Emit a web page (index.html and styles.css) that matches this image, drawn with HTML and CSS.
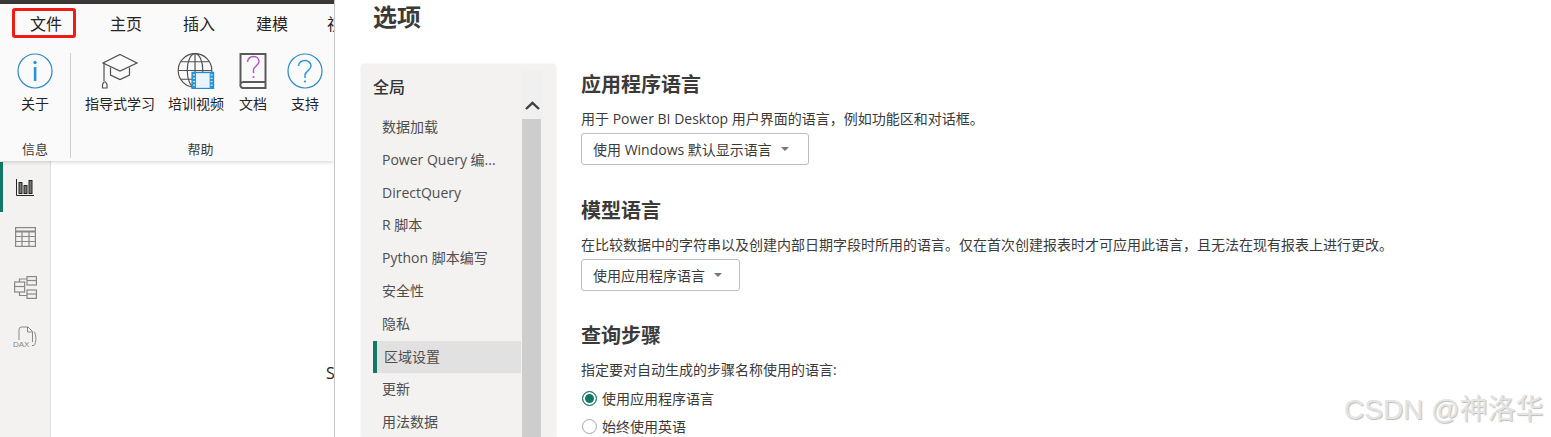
FILE: index.html
```html
<!DOCTYPE html>
<html lang="zh-CN">
<head>
<meta charset="utf-8">
<title>选项</title>
<link rel="stylesheet" href="styles.css">
</head>
<body>
<div class="app">
  <section class="left">
    <div class="topbar"></div>
    <header class="ribbon">
      <nav class="tabs">
        <span class="tab tab-file">文件</span>
        <span class="tab tab-home">主页</span>
        <span class="tab tab-insert">插入</span>
        <span class="tab tab-model">建模</span>
        <span class="tab tab-clip">视图</span>
      </nav>
      <div class="groups">
        <div class="group group-info">
          <div class="cmds">
            <div class="cmd cmd-about">
              <svg width="36" height="36" viewBox="0 0 36 36"><circle cx="18" cy="18" r="17" fill="none" stroke="#2b88c8" stroke-width="1.2"/><rect x="16.8" y="14" width="2.6" height="14" fill="#2b94d8"/><circle cx="18" cy="9.5" r="1.7" fill="#2b94d8"/></svg>
              <span>关于</span>
            </div>
          </div>
          <div class="group-label">信息</div>
        </div>
        <div class="group group-help">
          <div class="cmds">
            <div class="cmd cmd-learn">
              <svg width="38" height="36" viewBox="0 0 38 36" fill="none" stroke="#505050" stroke-width="1.2"><path d="M19 1.5 36 10 19 18 2 10Z"/><path d="M9.5 14.5V22L19 26.5 28.5 22V14.5"/><path d="M3 10V28"/><path d="M1.5 35V31.500L3 29 4.500 29 6 31.500V35Z"/></svg>
              <span>指导式学习</span>
            </div>
            <div class="cmd cmd-video">
              <svg width="38" height="37" viewBox="0 0 38 37"><g fill="none" stroke="#505050" stroke-width="1.2"><circle cx="18" cy="18" r="17.300"/><ellipse cx="18" cy="18" rx="8" ry="17.300"/><path d="M18 1V35M1 18H35M3.500 9H32.500M3.500 27H32.500"/></g><rect x="15" y="20" width="22" height="16.500" fill="#e8f4fb" stroke="#2b88c8" stroke-width="1.400"/><path d="M15 20h4v16.500h-4zM33 20h4v16.500h-4z" fill="#2b94d8"/><path d="M16 22.500h2M16 26h2M16 29.500h2M16 33h2M34 22.500h2M34 26h2M34 29.500h2M34 33h2" stroke="#fff"/></svg>
              <span>培训视频</span>
            </div>
            <div class="cmd cmd-doc">
              <svg width="28" height="36" viewBox="0 0 28 36"><path d="M1.500 31V1H26.500V35H4.500A3 3 0 0 1 1.500 31 3 3 0 0 1 4.500 29H26.500" fill="none" stroke="#5a5a5a" stroke-width="2"/><path d="M8.500 9C9 5 12 3.500 14.500 3.500 18 3.500 20 6 20 8.500 20 12 15 13.500 14.500 16.500V20" fill="none" stroke="#b552c4" stroke-width="1.400"/><circle cx="14.500" cy="24" r="1.100" fill="#b552c4"/></svg>
              <span>文档</span>
            </div>
            <div class="cmd cmd-support">
              <svg width="36" height="36" viewBox="0 0 36 36" fill="none"><circle cx="18" cy="18" r="17" stroke="#2b88c8" stroke-width="1.200"/><path d="M11.500 13C12 9 15 7.500 18 7.500 21.500 7.500 24 10 24 13 24 17 18.500 18 18 22V25" stroke="#2b94d8" stroke-width="1.400"/><circle cx="18" cy="28.500" r="1.100" fill="#2b94d8"/></svg>
              <span>支持</span>
            </div>
          </div>
          <div class="group-label">帮助</div>
        </div>
      </div>
    </header>
    <div class="work">
      <aside class="rail">
        <div class="rail-item rail-active">
          <svg width="18" height="17" viewBox="0 0 18 17" fill="none" stroke="#252423"><path d="M.5 0V16.500H18" stroke-width="1"/><rect x="3" y="3.500" width="3" height="11" fill="#777"/><rect x="8" y="6.500" width="3" height="8" fill="#777"/><rect x="13" y="1.500" width="3" height="13" fill="#777"/></svg>
        </div>
        <div class="rail-item">
          <svg width="21" height="20" viewBox="0 0 21 20" fill="none" stroke="#8a8886" stroke-width="1.200"><rect x=".6" y=".6" width="19.800" height="18.800"/><path d="M.6 4.500H20.400" stroke-width="2"/><path d="M.6 9.500H20.400M.6 14.500H20.400M7 4.500V19.400M14 4.500V19.400"/></svg>
        </div>
        <div class="rail-item">
          <svg width="23" height="23" viewBox="0 0 23 23" fill="none" stroke="#8a8886" stroke-width="1.200"><rect x=".6" y="6" width="10" height="10"/><path d="M.6 10.500H10.600"/><rect x="13" y=".6" width="9.400" height="8.400"/><path d="M13 4.500H22.400"/><rect x="13" y="14" width="9.400" height="8.400"/><path d="M13 18H22.400"/><path d="M5.500 6V3H13M5.500 16V19.500H13"/></svg>
        </div>
        <div class="rail-item">
          <svg width="24" height="22" viewBox="0 0 24 22" fill="none" stroke="#8a8886"><path d="M6 14V3.500A2.500 2.500 0 0 1 8.500 1H15L19.500 5.500V16"/><path d="M14.500 1V6H19.500"/><path d="M21 5.500C23.500 8 23.500 17 21 19.500H19"/><text class="dax" x="0" y="21">DAX</text></svg>
        </div>
      </aside>
      <main class="canvas"><span class="cut-s">S</span></main>
    </div>
  </section>

  <section class="dialog">
    <h1 class="title">选项</h1>
    <div class="body">
      <aside class="side">
        <div class="side-list">
          <div class="side-head">全局</div>
          <div class="side-item">数据加载</div>
          <div class="side-item">Power Query 编...</div>
          <div class="side-item">DirectQuery</div>
          <div class="side-item">R 脚本</div>
          <div class="side-item">Python 脚本编写</div>
          <div class="side-item">安全性</div>
          <div class="side-item">隐私</div>
          <div class="side-item side-selected">区域设置</div>
          <div class="side-item">更新</div>
          <div class="side-item">用法数据</div>
        </div>
        <div class="scroll">
          <div class="scroll-btn">
            <svg width="15" height="9" viewBox="0 0 15 9" fill="none" stroke="#3f3f3f" stroke-width="2.400"><path d="M1 8 7.500 1.800 14 8"/></svg>
          </div>
          <div class="scroll-thumb"></div>
        </div>
      </aside>
      <div class="content">
        <section class="block">
          <h2>应用程序语言</h2>
          <p>用于 Power BI Desktop 用户界面的语言，例如功能区和对话框。</p>
          <div class="select select-a">使用 Windows 默认显示语言<i class="caret"></i></div>
        </section>
        <section class="block">
          <h2>模型语言</h2>
          <p>在比较数据中的字符串以及创建内部日期字段时所用的语言。仅在首次创建报表时才可应用此语言，且无法在现有报表上进行更改。</p>
          <div class="select select-b">使用应用程序语言<i class="caret"></i></div>
        </section>
        <section class="block">
          <h2>查询步骤</h2>
          <p>指定要对自动生成的步骤名称使用的语言:</p>
          <div class="radio radio-on"><i class="dot"></i>使用应用程序语言</div>
          <div class="radio"><i class="dot"></i>始终使用英语</div>
        </section>
      </div>
    </div>
  </section>
</div>
<div class="watermark">CSDN @神洛华</div>
</body>
</html>
```

FILE: styles.css
```css
* { box-sizing: border-box; }
html, body { margin: 0; height: 437px; overflow: hidden; background: #fff; }
body { font-family: "Open Sans", "Noto Sans CJK SC", "Noto Sans", sans-serif; color: #333; }
.app { display: flex; height: 437px; width: 1551px; }

.left { width: 335px; flex: none; display: flex; flex-direction: column; border-right: 1px solid #c8c6c4; overflow: hidden; }
.topbar { height: 4px; background: #3b3a39; flex: none; }
.ribbon { height: 157px; flex: none; background: #fafafa; box-shadow: 0 1px 4px rgba(0,0,0,.18); position: relative; z-index: 1; display: flex; flex-direction: column; }
.tabs { display: flex; height: 39px; flex: none; font-size: 16px; color: #252423; align-items: center; white-space: nowrap; }
.tab { flex: none; line-height: 24px; }
.tab-file { margin-left: 12px; width: 64px; height: 30px; padding-left: 16px; line-height: 26px; border: 3px solid #f01c14; border-radius: 3px; margin-top: -2px; text-indent: -1px; }
.tab-home { margin-left: 34px; }
.tab-insert { margin-left: 41px; }
.tab-model { margin-left: 41px; }
.tab-clip { margin-left: 39px; }

.groups { display: flex; flex: 1; padding-top: 10px; padding-bottom: 3px; }
.group { display: flex; flex-direction: column; }
.group-info { width: 71px; border-right: 1px solid #d2d0ce; }
.group-help { flex: 1; }
.cmds { display: flex; flex: 1; }
.cmd { display: flex; flex-direction: column; align-items: center; font-size: 14px; color: #252423; white-space: nowrap; }
.cmd span { line-height: 20px; margin-top: 5px; }
.cmd svg { height: 36px; display: block; flex: none; }
.cmd-about { width: 70px; }
.cmd-learn { width: 74px; margin-left: 12px; }
.cmd-video { width: 60px; margin-left: 9px; }
.cmd-doc { width: 30px; margin-left: 12px; }
.cmd-support { width: 36px; margin-left: 19px; }
.group-label { font-size: 13px; line-height: 18px; text-align: center; color: #3b3a39; }
.group-help .group-label { padding-right: 4px; }

.work { flex: 1; display: flex; min-height: 0; }
.rail { width: 51px; flex: none; background: #f3f2f1; border-right: 1px solid #e1dfdd; padding-top: 1px; }
.rail-item { height: 50px; display: flex; align-items: center; justify-content: center; padding-left: 0; }
.rail-active { box-shadow: inset 3px 0 0 #117865; }
.rail-item svg { display: block; }
.dax { font: 8px "Liberation Sans", sans-serif; fill: #8a8886; stroke: none; }
.canvas { flex: 1; background: #fff; padding: 202px 0 0 275px; overflow: hidden; font-size: 16px; line-height: 20px; color: #252423; }
.cut-s { display: block; width: 8px; overflow: hidden; }

.dialog { flex: 1; min-width: 0; padding-left: 26px; overflow: hidden; }
.title { margin: 0 0 0 12px; font-size: 24px; font-weight: 700; line-height: 34px; height: 64px; color: #3b3a39; }
.body { display: flex; height: 373px; }
.side { width: 195px; flex: none; height: 373px; background: #f3f2f1; border-radius: 4px 4px 0 0; display: flex; padding: 0 15px 0 12px; box-shadow: 0 0 2px rgba(0,0,0,.12); }
.side-list { width: 149px; flex: none; font-size: 14px; color: #4f4e4d; }
.side-head { height: 47px; line-height: 47px; font-size: 16px; font-weight: 500; color: #333; margin-bottom: 0; }
.side-item { height: 32.800px; line-height: 32.800px; padding-left: 9px; white-space: nowrap; }
.side-selected { background: #e1e1e1; border-left: 4px solid #117865; padding-left: 7px; margin-right: 1px; }
.scroll { width: 19px; flex: none; display: flex; flex-direction: column; }
.scroll-btn { height: 49px; margin-top: 6px; background: #f0f0f0; display: flex; justify-content: center; align-items: flex-end; padding-bottom: 9px; width: 21px; }
.scroll-thumb { flex: 1; background: #cdcdcd; }

.content { flex: 1; padding-left: 25px; min-width: 0; }
.block { height: 125.500px; }
h2 { margin: 0; padding-top: 7px; font-size: 20px; font-weight: 700; line-height: 28px; color: #3b3a39; }
.block p { margin: 0; padding-top: 10px; font-size: 14px; line-height: 20px; color: #3b3a39; white-space: nowrap; }
.select { display: inline-flex; align-items: center; height: 32px; margin-top: 4px; padding-left: 11px; border: 1px solid #bdbdbd; border-radius: 3px; background: #fff; font-size: 14px; color: #3b3a39; white-space: nowrap; }
.select-a { width: 228px; }
.select-b { width: 159px; }
.caret { width: 0; height: 0; margin-left: 9px; border: 4px solid transparent; border-top-color: #777; border-bottom: 0; }
.radio { display: flex; align-items: center; height: 28px; font-size: 14px; color: #3b3a39; white-space: nowrap; }
.block p + .radio { margin-top: 4px; }
.dot { width: 15px; height: 15px; margin: 0 5px 0 1px; border: 1px solid #a8a8a8; border-radius: 50%; background: #fff; flex: none; }
.radio-on .dot { border: 1.500px solid #117865; box-shadow: inset 0 0 0 2px #fff; background: #117865; }

.watermark { position: absolute; left: 1344px; top: 391px; font: 28px/38px "Liberation Sans", "Noto Sans CJK SC", sans-serif; color: #e4e4e4; text-shadow: 1px 1px 1px #bdbdbd; white-space: nowrap; }
```
